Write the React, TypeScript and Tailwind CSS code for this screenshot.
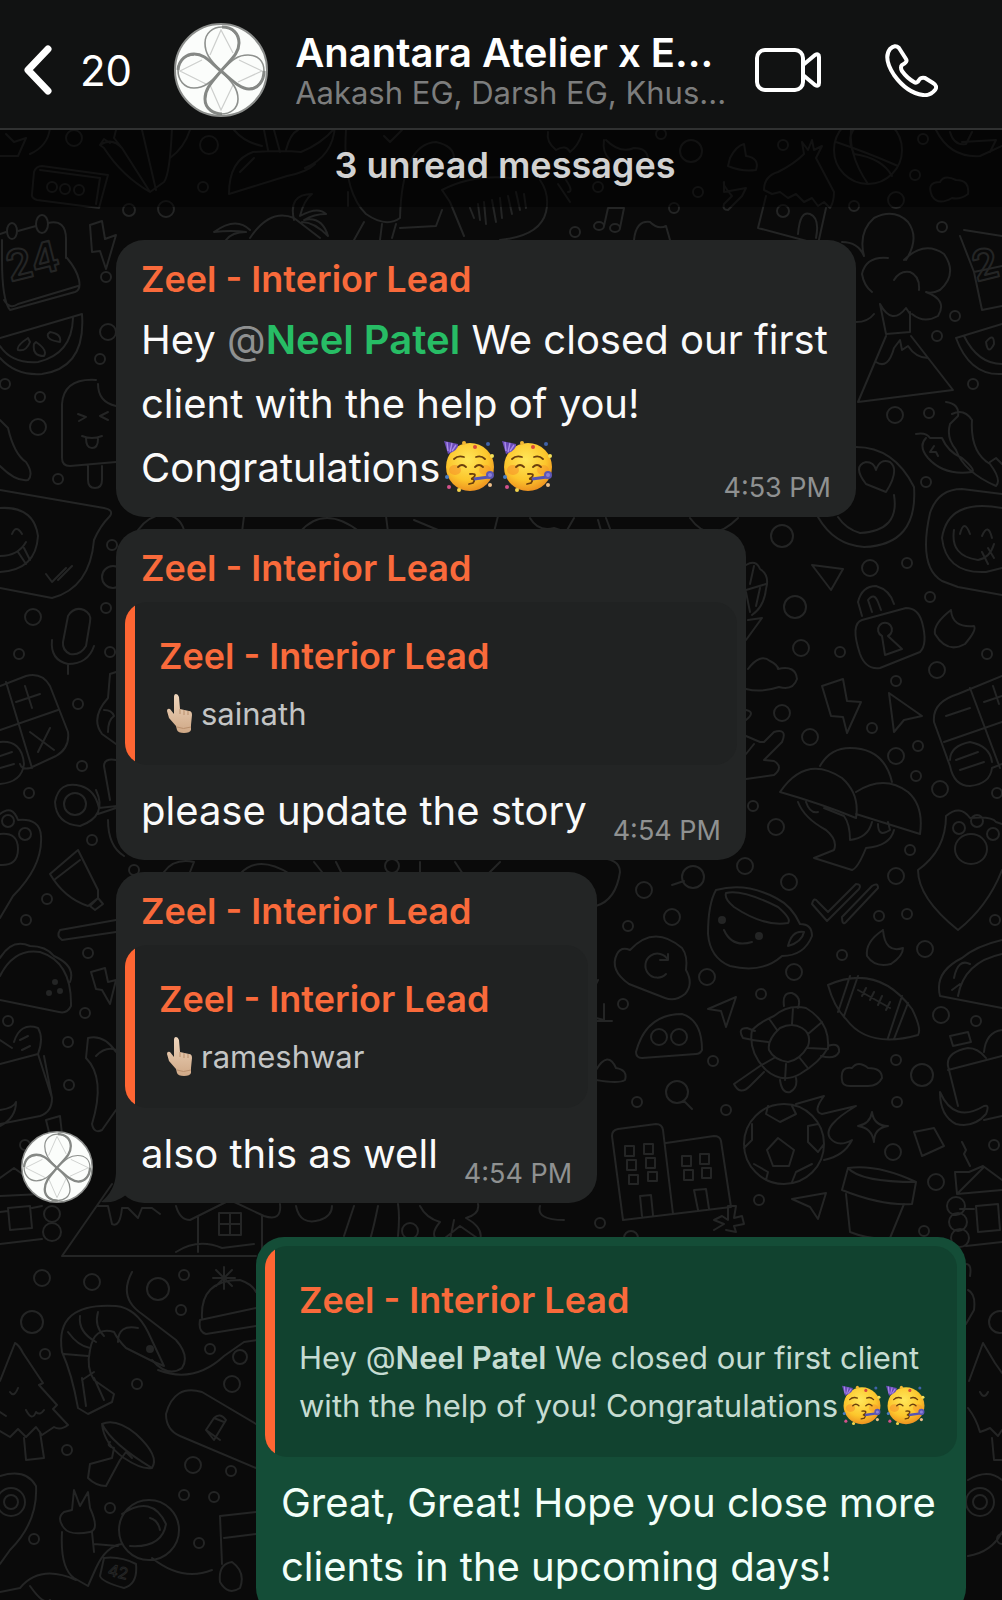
import React, { FC, ReactNode } from 'react'

// loose dots scattered between the doodles: [x, y, radius]
const dots = [
    [74, 138, 8], [209, 145, 9], [203, 187, 5], [129, 210, 6], [166, 209, 8], [661, 134, 5], [691, 151, 11],
    [783, 145, 5], [923, 139, 5], [915, 175, 5], [598, 187, 5], [698, 192, 5], [674, 208, 5], [854, 206, 5],
    [896, 200, 8], [942, 227, 5], [575, 232, 5], [106, 277, 5], [108, 332, 8], [100, 359, 5], [40, 397, 5],
    [38, 427, 8], [5, 384, 5], [58, 479, 5], [112, 545, 5], [113, 577, 11], [33, 617, 8], [106, 608, 5],
    [955, 316, 5], [937, 336, 5], [973, 384, 5], [895, 415, 8], [929, 413, 5], [926, 482, 5], [782, 536, 11],
    [870, 568, 8], [907, 563, 5], [795, 607, 11], [930, 597, 5], [19, 654, 5], [110, 652, 5], [78, 704, 5],
    [82, 766, 5], [29, 793, 5], [92, 840, 5], [47, 899, 5], [26, 920, 5], [88, 953, 5], [134, 870, 5],
    [801, 648, 8], [840, 652, 5], [987, 654, 5], [937, 670, 8], [896, 681, 5], [782, 713, 8], [810, 737, 8],
    [872, 728, 5], [896, 756, 8], [918, 746, 5], [916, 776, 5], [940, 789, 8], [997, 793, 5], [753, 806, 5],
    [776, 827, 8], [745, 866, 8], [693, 877, 11], [644, 890, 8], [672, 917, 8], [628, 926, 5], [789, 882, 8],
    [910, 850, 5], [896, 876, 8], [879, 916, 5], [907, 914, 5], [995, 920, 5], [842, 955, 5], [925, 949, 8],
    [794, 972, 8], [8, 1021, 5], [85, 1013, 5], [68, 1042, 5], [69, 1085, 5], [25, 1145, 5], [707, 977, 8],
    [761, 994, 5], [941, 1015, 8], [976, 1021, 5], [623, 1004, 5], [713, 1061, 5], [896, 1060, 5], [922, 1075, 11],
    [897, 1102, 5], [637, 1102, 5], [726, 1110, 5], [893, 1152, 8], [994, 1145, 5], [936, 1182, 8], [759, 1200, 5],
    [600, 1223, 5], [924, 1231, 5], [631, 1238, 7], [42, 1278, 8], [92, 1282, 8], [158, 1289, 11], [184, 1275, 5],
    [181, 1310, 5], [32, 1322, 11], [1000, 1322, 11], [45, 1354, 5], [210, 1349, 5], [240, 1357, 7], [137, 1384, 5],
    [232, 1384, 8], [67, 1450, 5], [193, 1465, 8], [231, 1471, 5], [184, 1495, 5], [214, 1497, 5], [110, 1508, 5],
    [34, 1539, 5], [1002, 1539, 5], [199, 1543, 5], [410, 1231, 8], [392, 866, 7], [52, 187, 5], [65, 189, 5], [79, 190, 5],
    [980, 1502, 14], [980, 1502, 7],
]

const doodles = [
    // bowl, remote, carrots
    'M0 156h18l8-18-12 4-8-8M30 154q18-8 20-26M34 172q2-6 8-6l66 9-9 33-62-8q-6-2-5-6zM96 204l4-26M40 170l60 8',
    'M100 145q12-8 22 3l28 44q-28-16-46-44zM100 145l4-6 6 4M116 130l-2 8 8 10M142 130l14 60M150 192l14-10q6-8 8-54M170 158q14-10 20-28',
    // chili and palm island
    'M229 194q0-34 24-42 30-2 48 0 20-8 34-24v-2q-2 30-30 42M229 194l58-18q20-4 28-12M240 172l14-14M234 130q10 12 28 16M264 130l4 20M274 130l6 22M286 150q4-16 12-20',
    'M250 238q20-30 44-20l26 20M294 220q-6-26 18-26-8 6-12 22 18-10 26-2-12 0-22 6 18-4 24 16-14-14-26-14M250 230q-14-14-36 2 18-2 32 0-14 0-20 8',
    // dumbbell, lightning, calendar
    'M0 234l6-2M18 231l18-5M48 223q18-4 18 16v2M90 225l12-4 3 18 11-4-10 34-6-18-8 1z',
    'M66 240v18M2 260q0 40 8 50l65-18q6-2 4-12-2-10-12-22M4 300q6 10 14 4l60-18M2 240v20',
    // melon
    'M0 338l82-24q4 54-40 60-26 2-42-16M0 346q12 18 38 16 34-8 35-44M28 338q-12 8-10 12 8 2 12-8zM36 342q12 8 8 14-12 0-10-12zM50 332q12 2 10 10-14-2-12-8z',
    // ice lolly
    'M116 462l-46 4q-8 0-8-8v-54q2-26 34-24M98 384q0 18 18 22M88 466v14q0 8 7 8t7-8v-14M78 414l8 3-7 4M108 412l-8 4 8 4M82 436q10 4 20 0M86 438q0 10 6 10t6-9',
    // banana tip, laughing bubble
    'M0 420l8 8q6 26 18 34 8 12 2 18-12 2-28-14M0 490l104 18q10 2 6 8-10 10-16 24-4 48-42 58l-52-10M0 508q34-2 38 28-2 34-38 36M12 534q4-10 10 0M0 556q18 0 26-14M18 552l8 12M24 548l6 12M46 574l6 8 14-14M58 580l14-14',
    // mic
    'M68 616q6-10 16-6 8 4 6 12l-4 24q-6 10-16 8-8-4-7-12zM52 640q-2 20 16 24 20 0 26-18M68 664l0 10',
    // calculator
    'M0 686l26-10q16-4 24 10l18 46q2 16-12 24l-26 12q-8 2-10-4M0 730l58-20M6 682l26 86M16 702l24-8M25 686l7 22M30 732l24 18M50 728l-12 24M0 742q22-2 24 22-2 18-24 20M0 756l12-4M0 768l14-4',
    'M116 672l-6 2-2 24q-18 20-6 36l14 10M104 710q8 0 10 6-6 4-6 16M116 760q-12-2-12 6l6 34',
    // magnifier, paw
    'M96 790q12 26-16 36-24-2-25-24 4-22 26-16 14 4 18 22l18-2M86 804a11 11 0 1 1-22 0a11 11 0 1 1 22 0M98 814l18-6M108 820q0 26 16 36',
    'M0 814q12-10 18 6 22-2 23 16 2 30-28 60l-13 22M14 821a6 6 0 1 1-12 0a6 6 0 1 1 12 0M31 834a6 6 0 1 1-12 0a6 6 0 1 1 12 0M0 834q18-2 18 15t-18 16',
    // paint tube, pen
    'M50 874l28-24 20 40 0 8-10 8q-24-8-38-32zM54 880l26-20M90 906l8-8 5 6-8 6zM60 930l56-10M60 930q-4 6 2 10l54-8',
    // burger, lightning
    'M0 958q12-20 30-12 16 0 24 10 22 10 16 26M0 976q14-28 40-24 32 10 31 54-4 8-12 6L0 1000M91 972l14-4 3 14 8-2-6 24-8-14-6-1z',
    // bag with fruit
    'M14 1042q6-20 24-14 6 10 0 26M0 1040l12 8M0 1064l38-10 14 44q0 14-12 18L0 1124M44 1056l8 42M0 1110q14-2 16-8 0 16-16 24M20 1040l8-4M22 1050l8-4',
    'M88 1038q16-4 28 14M88 1038l-2 20q20 20 6 66 2 10 10 6l14-20M96 1056q10-10 20-6M46 1120l14-4 2 18-12 2z',
    // log cabin left
    'M0 1178l14-10 14 10M0 1196l42-2M8 1208l22-2 2 22-22 2zM0 1212l8-1M32 1208l10-2M0 1244l42-5M60 1214a8 8 0 1 1-16 0a8 8 0 1 1 16 0M61 1232a9 9 0 1 1-18 0a9 9 0 1 1 18 0',
    // volcano
    'M842 242q16 0 22 14M864 256q-6-24 10-38 20-10 34 4 12 16-2 38M904 260q20-20 40-6 14 20-4 36-8 4-14 2 22 8 12 24-14 8-26-2M888 258q-22-2-26 16 2 12 10 18M894 280q6-10 16-8 10 4 9 18M856 322q12 0 18-8',
    'M880 304l6 30 24-2 0-20M880 304q12 22 26 4l4 6M886 336l-28 66 95-12-42-54M876 362q12 8 18-14l6-8 2 10 6-4q8 12 20 12',
    // chili peppers
    'M946 402q14 2 12 14l-8 8q-4 14 6 26 8 22 40 36 6-6-6-22-20-12-18-44-8-12-20-6M916 434q10-2 14 4l12 0q6 14 20 20 14 12 10 14-28 4-44-14-10-12-2-20M934 446l-4 6 6 0 2 4M990 462l6-4 6 6',
    // heart smiley
    'M856 447q38 0 58 40 4 58-50 60-30-2-46-30M894 495q6 36-34 38-14-4-22-16M866 484q-14-18 0-22 8 0 10 8 4-12 14-8 10 8-4 30z',
    // tongue-out bubble
    'M1002 494l-40-5q-24 0-32 24-12 54 12 68l16 6 44 8M1002 508q-54-10-60 30 4 36 44 34l16-4M954 530q-4 26 24 30 12-2 16-16M960 534q4-16 10 0M982 536q6-14 10 2M982 552l6 12M988 548l6 10',
    'M812 565l31 4-12 21zM746 565q10-6 14 4 10 6 6 20-2 18-14 26M746 590l20-6M750 612l-4-20M748 620l14-2-16 22M754 566l-4 18M760 588l-4 18',
    // padlock
    'M862 616l-4-14q4-16 18-16 14 4 18 18M872 612l-4-12q6-8 10 2l3 8M862 620l44-12q12 0 16 14 6 22-2 30l-40 16q-14 2-20-14-10-30 2-34zM882 636a7 7 0 1 1 6 0l14 13-17 6-3-19',
    'M951 610q-18 14-16 24 12 20 30 10 12-14 9-18-22 2-23-16',
    // cloud, bolt, cursor
    'M748 669q12-16 22-8 8 4 8 8 18-4 19 10-4 12-18 8-18 6-33 2M822 686l21-7 4 22 14 1-14 31-4-16-12-1zM889 693l33 23-18 4-10 12z',
    // open hand
    'M746 736l14 6 4 0 10-10q14-4 8 10l-18 18 10 1q10 6 0 14l-28 4M746 710q10 2 0 10M746 754l8-10',
    // gamepad
    'M958 694l44-18M958 694q-26 8-24 28l16 44q4 20 20 20 20-2 22-18l10-4M970 688l30 80M944 742l58-20M946 716l24-8M984 702l18-6M993 686l6 18M970 742q-20 4-20 18M970 742q20 4 22 20M956 760l22-8M960 770l24-8',
    // mushrooms
    'M780 792q26-38 62-14 18 16 14 40-34-14-76-26zM820 766q10-18 30-18 34 0 42 34M856 792q28-18 52 0 16 14 12 42l-64-20M798 802q6 16 28 28 12 10 8 20l-20 8 38 12q6-2 14-22 24-2 28-18M824 808l20 8q6 8 6 24 18-2 22-18M806 802q4 12 12 10M878 824q0 14 12 6l-2-8',
    // paw shield
    'M946 816q14-12 24 2 22-2 26 4l6 2M946 816q0 34-28 54 0 28 40 60 30-24 44-60M965 828a6 6 0 1 1-12 0a6 6 0 1 1 12 0M983 821a6 6 0 1 1-12 0a6 6 0 1 1 12 0M999 834a6 6 0 1 1-12 0a6 6 0 1 1 12 0M987 849a16 15 0 1 1-32 0a16 15 0 1 1 32 0',
    'M596 858q24 0 24 14-4 28-24 34M672 885l12-4',
    // mug
    'M716 890q30-8 60 8 16 8 24 26 12 0 12 12-8 20-30 20-20 18-52 10-20-8-22-32 0-30 8-44zM726 893q16-4 52 14 14 12 10 16-24 4-54-16-10-8-8-14zM724 930q8 18 28 12M788 946q4-16 16-14-2 10-16 14z',
    // double tick
    'M812 904q2-8 6-2l10 10 28-28q6 0 3 5l-32 32zM842 917l30-31q6-4 6 2l-32 34q-4 4-4-5z',
    'M883 930q-18 12-16 26 8 12 24 8 12-8 12-16-18 6-20-18',
    // sync cloud
    'M630 950q24-26 52-2 6 8 4 22 8 14-1 24-10 8-20 4l-36-14q-20-14-12-30 4-8 13-4zM668 960a12 12 0 1 0-2 14M660 960h8v-6',
    'M596 1021h16M604 1004v16l-8-2M596 984l2-4M636 1052q10-38 46-38 20 6 20 36-2 4-6 4l-54 4q-6 0-6-6zM667 1037a8 8 0 1 1-16 0a8 8 0 1 1 16 0M687 1037a8 8 0 1 1-16 0a8 8 0 1 1 16 0M708 1009l28-12-10 30-5-16z',
    // turtle
    'M774 1016q14-12 32-8 24 14 22 40-8 14-28 26-18 10-34-4-18-18-14-40 8-8 22-14zM780 1028q12-6 22 0 10 6 6 18-8 14-20 16-14-2-19-12-2-10 11-22zM784 1006q-2-14 8-13 10 4 6 15M753 1040l-10-2q-6-10 4-10l8 3M828 1046q12-4 11 6-4 8-18 4M760 1066l-26 18q6 12 16 2l14-14M780 1080q2 14 10 12 8-4 6-14M792 1024l1-16M808 1034l14-12M808 1048l20 1M799 1057l8 10M786 1064l-1 16M774 1058l-14 8M768 1042l-16-2M777 1030l-7-10',
    // rugby ball
    'M828 985q50-22 84 24 10 20 6 26-50 14-72-16-12-12-18-34zM838 1012l12-36M844 1016l14-40M888 1038l14-42M894 1039l14-36M858 990l32 18M866 988l-4 8M874 992l-4 8M882 996l-4 9M890 1002l-4 8',
    // taco, bottle
    'M940 996q-6-24 22-38 14-12 40-18M940 996l62 12M958 996q6-34 44-42M954 978q4-20 16-14M952 990l8-6M948 1066q-2-14 20-18 10 0 18 10M948 1066l10 40M948 1070l54-14M950 1036l18-4 3 10-18 4zM984 1052q2-20 18-22M940 1092q14 32 44 14 6-2 2 8-12 14-30 10-16-8-16-32zM984 1120l18-4',
    'M596 1070q12-20 20-2 12 2 9 12-6 4-29 0M842 1080q-2-14 10-12 6-8 16 0 14 0 14 10-4 8-14 8h-18q-8 0-8-6zM688 1092a11 11 0 1 1-22 0a11 11 0 1 1 22 0M684 1101l8 8',
    // buildings
    'M612 1136q0-6 6-7l38-5q6 0 7 6l10 84-50 6zM666 1143l48-7q6 0 7 5l10 66-58 7M625 1146h9v10h-9zM644 1144h9v10h-9zM627 1160h9v10h-9zM646 1158h9v10h-9zM629 1175h9v9h-9zM648 1172h9v9h-9zM682 1156h9v10h-9zM700 1154h9v10h-9zM684 1170h9v10h-9zM702 1168h9v10h-9zM642 1216l-2-20 11-1 2 20M698 1210l-4-20 12-1 3 20',
    // soccer ball on fire
    'M824 1144a40 40 0 1 1-80 0a40 40 0 1 1 80 0M778 1138l16 12-5 16h-16l-6-16zM768 1106l-2 8 14 8 16-8-4-8M752 1124l0 16-8 8M808 1126l0 16 10 10 6-8M808 1126l10-2M754 1164l14 8-2 8M812 1164l-16 8-4 10M796 1104l28-8q-12 16-2 18l34-8q-34 20-26 32 8 10 22 2-8 16-28 20M872 1112q2 14 16 14-14 2-14 16-2-14-16-16 12-2 14-14M914 1132l10-2 10-2 10 18-22 10zM962 1142l4 8-2 4 6 12',
    // flower pot
    'M848 1168q30-4 68 14l-4 22q-30 2-70-14zM848 1168q12 14 68 14M846 1194l4 38q20 8 40 6l14-34M792 1199l34-6-8 26-8-12zM714 1230l10-6-10-4 8-4 6 4 0-14h8l-2 12 8-2 2 8-10 2 2 6-10-2',
    'M955 1172h14l14-6 19 14M955 1172l2 22 26-26M957 1194l45-4M960 1209h14M976 1206l22-2 2 26-22 2zM965 1206a9 9 0 1 1-18 0a9 9 0 1 1 18 0M967 1222a9 9 0 1 1-18 0a9 9 0 1 1 18 0M969 1238a9 9 0 1 1-18 0a9 9 0 1 1 18 0M966 1246l36-4',
    // basketball and thatched hut
    'M902 150a34 34 0 1 1-68 0a34 34 0 1 1 68 0M836 142q30 10 62 24M852 122q-6 30 16 62M878 120q-38 4-24 34 28 4 38 22',
    'M764 190q0-14 14-18 16-8 26-18l-2-12 6 8 4-10 2 10 8-4-6 12 18 34q0 10-4 16l-6-6-6 4-6-8-8 4-8-8-8 4-8-6-8 2zM766 196l-8 32 60 16 8-36M798 234q2-24 12-20 10 4 6 24M789 211a6 6 0 1 1-12 0a6 6 0 1 1 12 0',
    'M932 196q-6-14 8-14 4-8 16-2 14 0 12 14-8 6-16 4-14 8-20-2M936 130q14 28 44 26l22-10M950 132q4 14 16 12l6-12M962 142l34-2-6 12',
    // music note and bits around
    'M604 226l4-18 16 0-4 20M604 226a5 4 0 1 1-10 0a5 4 0 1 1 10 0M620 228a5 4 0 1 1-10 0a5 4 0 1 1 10 0M724 192l22-4-4 8-14 14q-6 0-4-6l8-8q-10-12-8-14zM634 240q2-20 16-18 8 8 16 4l4 14M548 132q-2 10 8 18 10-6 14 2 8-6 12-18M604 140q-2 12 6 20M606 140q14 14 28 8 14 0 14 12M730 158q6-12 14-14l2 12q14 2 10 14-14 2-28-4zM558 184l12 18M566 180q8 12 2 12',
    // boot and voice note
    'M346 130q-4 60 20 84 20 14 34 4 2-74 36-76 18 4 18 16M348 192v14M400 228l36-2 6-16M442 190q30-16 70-12M442 190l8 12 14 34M364 222l-10 18M382 224l-2 16M396 224l-4 14M470 208l4 10M478 204l2 16M484 202l2 22M492 200l4 22M500 198l2 20M508 196l4 18M516 192l4 18M524 194l2 14M546 212q-6 24-46 28M540 180q10 14 6 32M384 136l6 6 12-12',
    'M1002 236l-38-6M960 236l14 36 8 38 20-4M974 272l28-6M956 338l46-14M956 338q14 38 46 36M964 336q14 28 38 28M986 342q8-10 8 2-6 12-8-2',
    // fir tree and pin on the right edge
    'M983 1343l-14 38M983 1343l12 20 7 10M968 1408q8 10 12 24 6-2 10-4l8 8 4-6M992 1438l2 22 8 0M980 1392q4 8 8 0M968 1480q20-12 34 0M1002 1532q-10 20-34 24M968 1290q8 4 6 20l-8 14M966 1264q6 0 4 12',
    // things in the gaps between bubbles
    'M138 530q10-14 26-16 16 2 20 16M244 516l-2 16M300 532q24-28 60 0M386 516l2 16M414 520l24 10M498 516l-4 16M530 518q8 14 24 10l12 4 8-14M598 520l4 14M606 518l6 16M690 518q20 28 48 0',
    'M164 872q10-14 30-10l-4 10M240 874q18-20 50 0M314 862l8 10M336 862l6 12M420 862v14M455 862l8 12M500 862l-12 12',
    // cottage under the last incoming bubble
    'M98 1206l10 0 4 18q8 4 10-16l6 0 10 10 4-10 10 0 8 6M62 1256l50-72M62 1256h194M176 1206q4 14 14 14l8-4v36M198 1216l32-16 34 16q18 6 16-12M262 1216v40M176 1252q22-14 46-4l32-4M219 1213h22v22h-22zM230 1213v22M219 1224h22M296 1206q4 20 24 14 12-4 12-14M344 1236l10-30M370 1240q4-14 8-34M398 1236q2-20 0-32M420 1206q6 12 20 16-12 14 0 20l20-16 20 14q4-12-14-22 14-4 12-14M450 1240l4-20M540 1206q-4 14 24 14',
    // shrimp
    'M62 1352q-8-50 54-46 20 2 32 26l16 34-10-4-28-14q-8-8-12-16-20-6-24 18-4 18 4 30l20 14-2 8-24 12-10-6q-6-34-16-56zM118 1342q0-18 20-14M98 1312q-4 14 6 24M80 1316q-2 16 16 26M68 1332q10 14 22 16M64 1354l24 2M82 1380l12-8M86 1406l-4-28M104 1400l-10-22',
    'M132 1272q-14 26 10 42l34 26q14 16 6 28-14 10-30-8M158 1370q36 14 66-14l20-14 14-2',
    // beanie, sledge
    'M202 1318q-2-38 38-38 12 4 16 12M200 1320l56-12M200 1320q-2 12 6 14l50-8M216 1270l16 16M232 1270l-16 16M224 1267v22M213 1278h22',
    'M256 1424l-54-32q-28-8-36 22 0 16 14 22l76 32M206 1430l8-12q6-6 12 2l-12 20zM206 1430l14 10M214 1418l10 4',
    // fir tree
    'M15 1343q4 2 8 10l20 30-4 2 18 20-4 4 15 16q-8 6-14 2l-12 8-6-8-10 10-8-8-8 8-10-6M15 1343l-15 38M24 1438l2 22 18-2-4-26M10 1392q4 6 8-4M26 1410q6 12 10 2 4 4 8-2M0 1412l6 4',
    // mushroom
    'M102 1424q14-6 34 10 24 22 16 34-10 2-28-10-20-14-22-34zM102 1424q10 20 50 44M110 1442q-4 4 4 6l-2 10-22 6-2 14q8 8 18 8l14-26 6-8 6 6',
    // pin and astronaut
    'M0 1476q26-8 36 10 2 36-26 64l-10 14M25 1502a14 14 0 1 1-28 0a14 14 0 1 1 28 0M18 1502a7 7 0 1 1-14 0a7 7 0 1 1 14 0',
    'M179 1530a30 30 0 1 1-60 0a30 30 0 1 1 60 0M122 1514q30-20 44 10-4 24-36 22M150 1518q8 2 10 12M64 1528q-8-10 0-16l8-2 2-20 6 16 8-14 2 16q10 22 0 24-20 4-26-4zM62 1532q-2 36 12 46l14 8 8-18q10-22 26-24M92 1532l2 20M94 1544l24 2M104 1558q16-2 32 6 2 20-12 24-22-6-24-12zM152 1558q30 24 60 12M20 1588q20-24 56-8M30 1586q14 20 20 14M0 1592l20-4',
    'M256 1512l-36 4 2 48M224 1538l32-4M232 1562q14 10 8 26-12 8-20-6-2-18 12-20z',
]

const DoodleWall: FC = () => (
    <svg className="absolute inset-0 h-full w-full" fill="none" stroke="#242525" strokeWidth="2"
        strokeLinejoin="round" strokeLinecap="round" aria-hidden="true">
        {doodles.map((d, i) => <path key={i} d={d} />)}
        {dots.map(([x, y, r], i) => <circle key={i} cx={x} cy={y} r={r} />)}
        <g fill="#242525">
            <circle cx="55" cy="982" r="2" />
            <circle cx="49" cy="993" r="2" />
            <circle cx="60" cy="991" r="2" />
            <circle cx="722" cy="920" r="3" />
            <circle cx="759" cy="936" r="3" />
            <circle cx="150" cy="1349" r="3" />
        </g>
        <ellipse cx="12" cy="231" rx="5" ry="8" />
        <ellipse cx="42" cy="224" rx="6" ry="9" />
        <g className="text-[42px] font-semibold">
            <text transform="translate(10 282) rotate(-14)">24</text>
            <text transform="translate(976 282) rotate(-14)">2</text>
        </g>
        <text className="text-[16px]" strokeWidth="1" transform="translate(107 1575) rotate(14)">42</text>
    </svg>
)

const Avatar: FC<{ className: string }> = ({ className }) => (
    <svg viewBox="0 0 94 94" className={className} fill="none" role="img" aria-label="Group photo">
        <circle cx="47" cy="47" r="46" fill="#fbfdfb" stroke="#8b8d8b" strokeWidth="2" />
        <g stroke="#cdcfcd" strokeWidth="1.2">
            <path d="M36 32L47 7l12 23M36 62l11 25 12-25M28 37L6 48l26 13M65 37l23 11-24 11" />
        </g>
        <g stroke="#8d908d" strokeWidth="1.6">
            <path d="M47 48C35 36 31 30 31 20C31 10 39 4 48 4C57 4 65 11 65 20" />
            <path d="M47 48C59 60 64 66 64 76C64 86 56 91 47 91C39 91 31 86 31 76" />
            <path d="M47 48C36 60 30 65 20 65C10 65 4 57 4 47C4 38 11 32 20 32" />
            <path d="M47 48C59 36 64 32 74 32C84 32 90 38 90 48C90 58 83 66 74 66" />
        </g>
        <g stroke="#858885" strokeWidth="3">
            <path d="M48 4C59 4 65 11 65 20C65 31 56 37 47 48C37 60 31 66 31 76C31 86 40 91 48 91" />
            <path d="M4 47C5 36 13 31 20 31C31 31 36 39 47 48C58 57 66 66 75 66C84 66 90 58 90 48" />
        </g>
    </svg>
)

const PartyFace: FC<{ className: string }> = ({ className }) => (
    <svg viewBox="0 0 52 52" className={className} fill="none" role="img" aria-label="partying face">
        <defs>
            <radialGradient id="skin" cx="0.45" cy="0.35" r="0.65">
                <stop offset="0" stopColor="#ffe75a" />
                <stop offset="0.65" stopColor="#fcc62c" />
                <stop offset="1" stopColor="#ee9320" />
            </radialGradient>
        </defs>
        <circle cx="26" cy="27" r="24" fill="url(#skin)" />
        <ellipse cx="11" cy="30" rx="6" ry="5" fill="#f58a2a" opacity="0.5" />
        <ellipse cx="41" cy="30" rx="6" ry="5" fill="#f58a2a" opacity="0.4" />
        <path d="M0 1l14 3q1 6-10 10z" fill="#6a4bb8" />
        <path d="M3 2l1 9M8 3l-2 9M12 5l-4 6" stroke="#a98be8" strokeWidth="1.4" />
        <g stroke="#6b3f0d" strokeWidth="1.8" strokeLinecap="round">
            <path d="M10 19q4-4 10-2M32 17q5-2 9 2M14 27q4-4 8 0M31 27q4-4 8 0M26 34q7-1 4 3-3 2-2 2 4 0 1 4l-4 1" />
        </g>
        <path d="M30 39l15-2" stroke="#5654b4" strokeWidth="3" />
        <circle cx="46" cy="35" r="4" fill="#5d57b5" />
        <circle cx="46" cy="35" r="2" fill="#8b7fd6" />
        <circle cx="20" cy="3" r="2" fill="#f2b632" />
        <circle cx="31" cy="7" r="2" fill="#d84a3a" />
        <circle cx="44" cy="4" r="2" fill="#3f62a8" />
        <circle cx="48" cy="16" r="2" fill="#f4df58" />
        <circle cx="5" cy="47" r="2" fill="#d4528c" />
        <circle cx="15" cy="50" r="2" fill="#f2d34a" />
        <circle cx="46" cy="45" r="2" fill="#eec08a" />
        <circle cx="3" cy="37" r="2" fill="#4a7bc0" />
    </svg>
)

const PointUp: FC = () => (
    <svg viewBox="0 0 38 40" className="mr-1 inline-block h-10 w-[38px] align-[-8px]" fill="none"
        role="img" aria-label="pointing up">
        <defs>
            <linearGradient id="hand" x1="0" y1="0" x2="0" y2="1">
                <stop offset="0" stopColor="#efd6bd" />
                <stop offset="1" stopColor="#cfa886" />
            </linearGradient>
        </defs>
        <path d="M15 4q0-3 2-3t3 3l1 12 9 2q3 0 3 4l-1 10v5q-1 3-7 3t-7-3l-1-4-7-8-2-7q0-3 3-2l4 5z" fill="url(#hand)" />
        <path d="M21 16l0 5M25 17v5M29 18v4M18 34q6 3 14 0" stroke="#b98f6c" strokeWidth="1" />
    </svg>
)

const Sender: FC = () => (
    <h2 className="text-[36px] leading-[54px] font-semibold text-[#f96a3b]">Zeel - Interior Lead</h2>
)

interface QuoteProps {
    tint: string
    children: ReactNode
}

const Quote: FC<QuoteProps> = ({ tint, children }) => (
    <blockquote className={`-mx-4 flex overflow-hidden rounded-[22px] ${tint}`}>
        <div className="w-[10px] shrink-0 bg-[#ff6633]" />
        <div className="pt-[27px] pr-5 pb-[27px] pl-6">
            <Sender />
            <p className="mt-[7px] text-[31px] leading-[48px]">{children}</p>
        </div>
    </blockquote>
)

const Time: FC<{ children: string }> = ({ children }) => (
    <time className="float-right mt-9 -mb-1 ml-[26px] text-[27px] leading-8 text-[#8f9191]">{children}</time>
)

interface IncomingProps {
    text: ReactNode
    time: string
    quote?: string
    last?: boolean
}

const Incoming: FC<IncomingProps> = ({ text, time, quote, last }) => (
    <article className="relative w-fit max-w-[740px] rounded-[28px] bg-[#232525] px-[25px] pt-3 pb-[17px]">
        {last && (
            <svg viewBox="0 0 32 30" className="absolute bottom-0 -left-4 h-[30px] w-8" aria-hidden="true">
                <path d="M16 0Q15 18 1 29Q14 31 26 22L36 30V0Z" fill="#232525" />
            </svg>
        )}
        <Sender />
        {quote && (
            <div className="mt-[7px] mb-3 text-[#c3c5c5]">
                <Quote tint="bg-[#202222]"><PointUp />{quote}</Quote>
            </div>
        )}
        <p className="pt-[2px] text-[40px] leading-[64px] text-[#fafafa]">
            {text}
            <Time>{time}</Time>
        </p>
    </article>
)

const Header: FC = () => (
    <header className="relative flex h-[130px] shrink-0 items-center border-b-2 border-[#303131] bg-[#111212] pt-3 pr-16 pl-6">
        <button className="flex items-center gap-7 text-[42px] text-white" aria-label="Back, 20 unread chats">
            <svg viewBox="0 0 28 50" className="h-[50px] w-7" fill="none" stroke="#fff" strokeWidth="7"
                strokeLinecap="round" strokeLinejoin="round">
                <path d="M24 4L4 25l20 21" />
            </svg>
            20
        </button>
        <Avatar className="ml-[42px] size-[94px] shrink-0" />
        <div className="ml-[27px] min-w-0 flex-1 pt-[2px] whitespace-nowrap">
            <h1 className="text-[40px] leading-[44px] font-semibold text-white">Anantara Atelier x E...</h1>
            <p className="text-[31px] leading-9 text-[#7c7d7d]">Aakash EG, Darsh EG, Khus...</p>
        </div>
        <button aria-label="Video call">
            <svg viewBox="0 0 66 44" className="h-11 w-[66px]" fill="none" stroke="#fff" strokeWidth="4"
                strokeLinejoin="round">
                <rect x="2" y="2" width="46" height="40" rx="8" />
                <path d="M48 17L60 7q4-2 4 2v26q0 4-4 2L48 27" />
            </svg>
        </button>
        <button className="ml-16" aria-label="Voice call">
            <svg viewBox="0 0 53 53" className="size-[53px]" fill="none" stroke="#fff" strokeWidth="4"
                strokeLinejoin="round">
                <path d="M5 5Q10 0 14 4L21 15Q23 18 17 21Q15 23 17 27Q22 34 29 38Q32 40 34 36Q36 33 40 34L48 39Q53 42 50 46Q45 52 38 51Q22 49 9 31Q-2 14 5 5Z" />
            </svg>
        </button>
    </header>
)

const App: FC = () => {
    return (
        <div className="relative flex h-screen flex-col overflow-hidden bg-[#0a0a0a] font-['Inter',sans-serif]">
            <DoodleWall />
            <Header />

            <main className="relative">
                <div className="bg-black/50 pt-[10px] pb-[17px] pl-2 text-center text-[36px] leading-[50px] font-semibold text-[#d2d2d2]">
                    3 unread messages
                </div>

                <section className="mt-[33px] flex items-end gap-[23px] pl-[21px]">
                    <Avatar className="size-[72px] shrink-0" />
                    <div className="flex min-w-0 flex-col gap-3">
                        <Incoming
                            time="4:53 PM"
                            text={<>
                                Hey <span className="text-[#8f9191]">@</span>
                                <span className="font-semibold text-[#27bd65]">Neel Patel</span> We closed our first
                                client with the help of you! Congratulations
                                <PartyFace className="ml-1 inline-block size-[52px] align-[-10px]" />
                                <PartyFace className="ml-[6px] inline-block size-[52px] align-[-10px]" />
                            </>}
                        />
                        <Incoming quote="sainath" text="please update the story" time="4:54 PM" />
                        <Incoming quote="rameshwar" text="also this as well" time="4:54 PM" last />
                    </div>
                </section>

                <article className="mt-[34px] mr-9 ml-auto w-fit max-w-[710px] rounded-[28px] bg-[#144d37] px-[25px] pt-[9px] pb-[17px]">
                    <div className="mb-3 text-[#c6dcd2]">
                        <Quote tint="bg-[#11422f]">
                            Hey @<span className="font-semibold">Neel Patel</span> We closed our first client
                            with the help of you! Congratulations
                            <PartyFace className="ml-1 inline-block size-10 align-[-8px]" />
                            <PartyFace className="ml-1 inline-block size-10 align-[-8px]" />
                        </Quote>
                    </div>
                    <p className="pt-[2px] text-[40px] leading-[64px] text-[#f2fff9]">
                        Great, Great! Hope you close more clients in the upcoming days!
                    </p>
                </article>
            </main>
        </div>
    )
}

export default App
